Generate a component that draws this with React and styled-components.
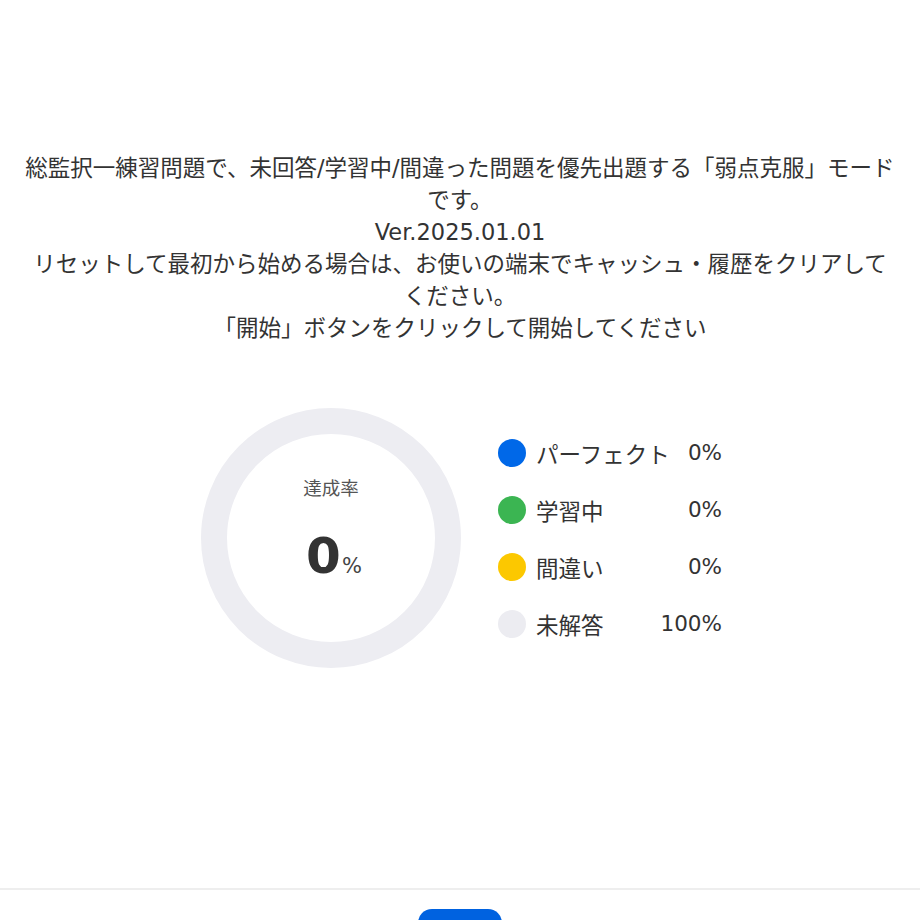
import React from 'react';
import styled, { createGlobalStyle } from 'styled-components';

const GlobalStyle = createGlobalStyle`
    body {
        margin: 0;
        background: #ffffff;
        font-family: "DejaVu Sans", "Noto Sans CJK JP", sans-serif;
        color: #333333;
    }
`

const stats = [
    { label: 'パーフェクト', value: 0, color: '#0068e8' },
    { label: '学習中', value: 0, color: '#3bb552' },
    { label: '間違い', value: 0, color: '#fcc800' },
    { label: '未解答', value: 100, color: '#ececf1' },
]

const App = () => {
    return (
        <>
            <GlobalStyle />
            <Page>
                <Main>
                    <Intro>
                        <p>総監択一練習問題で、未回答/学習中/間違った問題を優先出題する「弱点克服」モードです。</p>
                        <p>Ver.2025.01.01</p>
                        <p>リセットして最初から始める場合は、お使いの端末でキャッシュ・履歴をクリアしてください。</p>
                        <p>「開始」ボタンをクリックして開始してください</p>
                    </Intro>

                    <Summary>
                        <Ring>
                            <RingLabel>達成率</RingLabel>
                            <RingValue>0<small>%</small></RingValue>
                        </Ring>
                        <Legend>
                            {stats.map((s) => (
                                <React.Fragment key={s.label}>
                                    <Dot $color={s.color} />
                                    <LegendLabel>{s.label}</LegendLabel>
                                    <LegendValue>{s.value}%</LegendValue>
                                </React.Fragment>
                            ))}
                        </Legend>
                    </Summary>
                </Main>
                <Footer>
                    <StartButton>開始</StartButton>
                </Footer>
            </Page>
        </>
    );
}

const Page = styled.div`
    width: 920px;
    height: 920px;
    overflow: hidden;
    display: flex;
    flex-direction: column;
`

const Main = styled.main`
    height: 888px;
    box-sizing: border-box;
    padding-top: 152px;
    flex-shrink: 0;
`

const Intro = styled.div`
    width: 870px;
    margin: 0 auto;
    text-align: center;
    font-size: 22.5px;
    line-height: 32px;
    color: #333;

    p {
        margin: 0;
    }
`

const Summary = styled.div`
    margin-top: 64px;
    display: flex;
    justify-content: center;
    align-items: center;
    gap: 37px;
    padding-left: 3px;
`

const Ring = styled.div`
    width: 260px;
    height: 260px;
    box-sizing: border-box;
    border: 26px solid #ededf2;
    border-radius: 50%;
    display: flex;
    flex-direction: column;
    align-items: center;
    justify-content: center;
    padding-bottom: 10px;
`

const RingLabel = styled.div`
    font-family: "Noto Sans CJK JP", sans-serif;
    font-size: 18.5px;
    color: #555;
    line-height: 24px;
`

const RingValue = styled.div`
    margin-top: 32px;
    font-weight: 700;
    font-size: 50px;
    line-height: 50px;
    color: #333;
    padding-left: 6px;

    small {
        font-weight: 400;
        font-size: 21px;
        margin-left: 1px;
        color: #444;
    }
`

const Legend = styled.div`
    display: grid;
    grid-template-columns: 28px 113px 63px;
    column-gap: 10px;
    row-gap: 29px;
    align-items: center;
`

const Dot = styled.span`
    width: 28px;
    height: 28px;
    border-radius: 50%;
    background: ${(p) => p.$color};
`

const LegendLabel = styled.span`
    font-family: "Noto Sans CJK JP", sans-serif;
    font-size: 22.5px;
    line-height: 28px;
    white-space: nowrap;
    color: #333;
`

const LegendValue = styled.span`
    font-size: 21.5px;
    line-height: 28px;
    text-align: right;
    white-space: nowrap;
    color: #333;
`

const Footer = styled.footer`
    border-top: 2px solid #eeeeee;
    display: flex;
    justify-content: center;
    padding-top: 19px;
`

const StartButton = styled.button`
    width: 84px;
    height: 44px;
    border: none;
    border-radius: 14px;
    background: #0062e0;
    color: #fff;
    font-size: 18px;
    font-family: "Noto Sans CJK JP", sans-serif;
`

export default App;
